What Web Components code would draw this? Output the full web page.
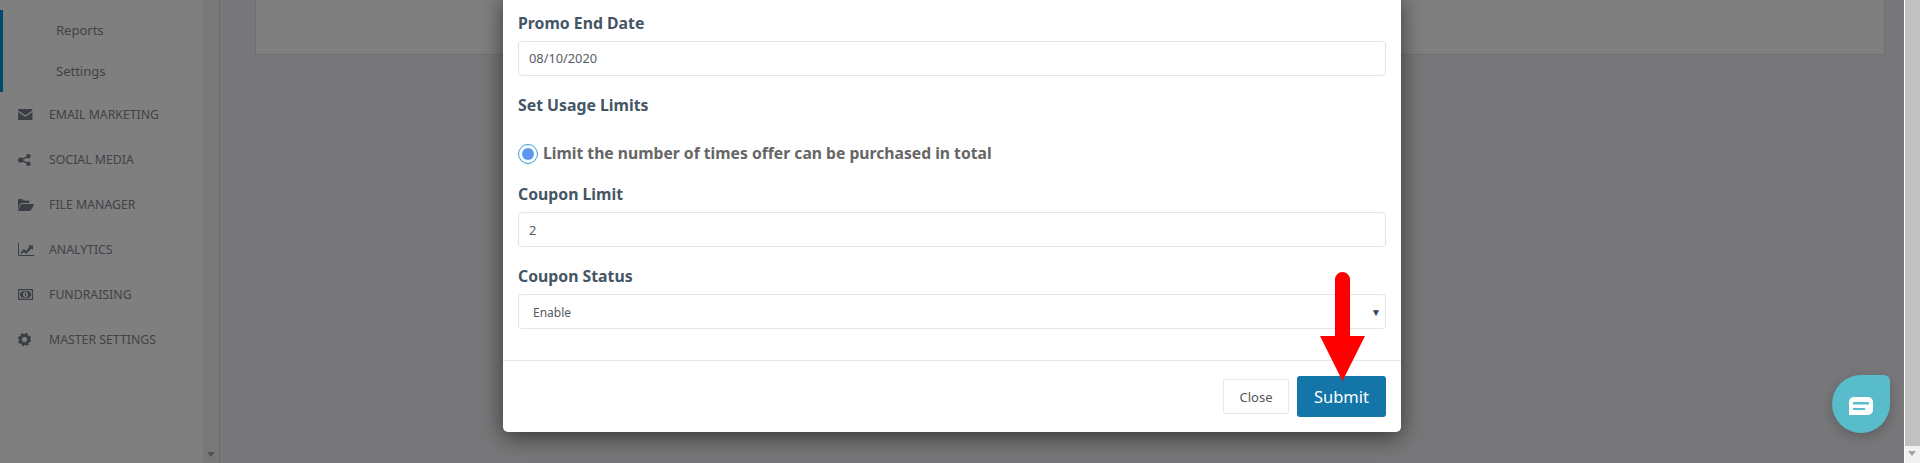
<!DOCTYPE html>
<html><head><meta charset="utf-8">
<style>
html,body{margin:0;padding:0;height:463px;overflow:hidden;background:#fff}
body{font-family:"Noto Sans","Open Sans",sans-serif}
</style></head><body>
<app-shell>
  <side-nav slot="nav">
    <sub-item>Reports</sub-item>
    <sub-item>Settings</sub-item>
    <nav-item><svg slot="icon" viewBox="0 0 15 12" width="14.500" height="11.500"><path fill="currentColor" d="M0 1.2C0 .5.5 0 1.2 0h12.6c.7 0 1.2.5 1.2 1.2v.4L7.5 6.600 0 1.600zM0 3.100l7.500 5 7.500-5v7.700c0 .7-.5 1.200-1.200 1.200H1.200C.5 12 0 11.500 0 10.800z"/></svg>EMAIL MARKETING</nav-item>
    <nav-item><svg slot="icon" viewBox="0 0 13 12" width="13" height="12"><g fill="currentColor"><circle cx="2.600" cy="6" r="2.600"/><circle cx="10.400" cy="2.300" r="2.300"/><circle cx="10.400" cy="9.700" r="2.300"/></g><path stroke="currentColor" stroke-width="1.400" d="M2.600 6l7.800-3.700M2.600 6l7.800 3.700"/></svg>SOCIAL MEDIA</nav-item>
    <nav-item><svg slot="icon" viewBox="0 0 16 12" width="16" height="12"><path fill="currentColor" d="M0 10V1.200C0 .5.500 0 1.200 0h3l1.300 1.500h4.800c.7 0 1.200.5 1.200 1.200V4H4C3.200 4 2.600 4.400 2.200 5z"/><path fill="currentColor" d="M4 5h11c.8 0 1.200.6.800 1.200L13 11c-.4.6-.9 1-1.600 1H1c-.8 0-1.200-.6-.8-1.200L2.800 5.800C3.100 5.300 3.500 5 4 5z"/></svg>FILE MANAGER</nav-item>
    <nav-item><svg slot="icon" viewBox="0 0 16 13" width="16" height="13"><path fill="none" stroke="currentColor" stroke-width="1" d="M.5 0v12.500H16"/><path fill="currentColor" d="M2.500 9.500 6 6l2 2 3.500-4L10 2.500h5V7l-1.500-1.500L8 11 6 9l-2.500 2z"/></svg>ANALYTICS</nav-item>
    <nav-item><svg slot="icon" viewBox="0 0 15 11" width="15" height="11"><path fill="currentColor" fill-rule="evenodd" d="M0 0h15v11H0zM1.200 1.200v8.600h12.600V1.200z"/><path fill="currentColor" fill-rule="evenodd" d="M3.500 2.300h8c.2 1 .7 1.500 1.500 1.700v3c-.8.200-1.300.7-1.500 1.700h-8C3.300 7.700 2.800 7.200 2 7V4c.8-.2 1.300-.7 1.500-1.700zM7.500 3a2.500 2.500 0 1 0 0 5 2.500 2.500 0 0 0 0-5z"/><rect x="7" y="4" width="1.200" height="3" fill="currentColor"/></svg>FUNDRAISING</nav-item>
    <nav-item><svg slot="icon" viewBox="0 0 24 24" width="13" height="13"><circle cx="12" cy="12" r="7.500" fill="none" stroke="currentColor" stroke-width="5.500"/><circle cx="12" cy="12" r="10" fill="none" stroke="currentColor" stroke-width="4.500" stroke-dasharray="4.300 3.550"/></svg>MASTER SETTINGS</nav-item>
  </side-nav>
  <promo-modal>
    <form-field label="Promo End Date" value="08/10/2020" style="--fs:12.800px;--off:-1px"></form-field>
    <limit-group></limit-group>
    <form-field label="Coupon Limit" value="2" style="--fs:12.800px"></form-field>
    <form-field label="Coupon Status" value="Enable" select style="--off:1px"></form-field>
  </promo-modal>
  <chat-bubble></chat-bubble>
</app-shell>
<script>
function def(name, html){
  customElements.define(name, class extends HTMLElement{
    constructor(){super();this.attachShadow({mode:'open'}).innerHTML=html(this);}
  });
}
const F='"Noto Sans","Open Sans",sans-serif';
def('app-shell',()=>`<style>
:host{display:flex;width:1920px;height:463px;overflow:hidden;position:relative;font-family:${F}}
.page{position:relative;flex:none;width:1904px;height:463px;display:flex;background:#eeeff2;overflow:hidden}
.side{flex:none;width:220px;display:flex;box-sizing:border-box;border-right:1px solid #d8d8d8;background:#fff}
.bar{flex:none;width:16px;background:#f1f1f1;position:relative;margin-left:auto}
.bar i{position:absolute;left:4px;bottom:6px;border:4px solid transparent;border-top:5px solid #a3a3a3;border-bottom:0}
.main{flex:1;padding:0 19px 0 35px;min-width:0}
.card{height:55px;box-sizing:border-box;background:#fff;border:1px solid #dfdfdf;border-top:0}
.dim{position:absolute;inset:0;background:rgba(0,0,0,.5)}
.sb{flex:none;width:16px;box-sizing:border-box;border-left:1px solid #fff;background:#f1f1f1;display:flex;flex-direction:column}
.sb b{flex:1;background:#c1c1c1}
.sb span{height:17px;position:relative}
.sb span i{position:absolute;left:3px;top:5px;border:4px solid transparent;border-top:5px solid #a3a3a3;border-bottom:0}
</style>
<div class="page">
  <div class="side"><slot name="nav"></slot><div class="bar"><i></i></div></div>
  <div class="main"><div class="card"></div></div>
  <div class="dim"></div>
  <slot></slot>
</div>
<div class="sb"><b></b><span><i></i></span></div>`);
def('side-nav',()=>`<style>
:host{display:block;width:203px;flex:none;padding-top:10px;box-sizing:border-box}
</style><slot></slot>`);
def('sub-item',()=>`<style>
:host{display:block;height:41px;line-height:41px;padding-left:56px;font-size:13px;color:#80868e;box-shadow:inset 3px 0 0 #0595d6}
</style><slot></slot>`);
def('nav-item',()=>`<style>
:host{display:flex;align-items:center;height:45px;font-size:12.300px;color:#80868e;padding-left:18px}
.i{width:31px;flex:none;display:flex;color:#747f8a}
</style><span class="i"><slot name="icon"></slot></span><slot></slot>`);
def('promo-modal',()=>`<style>
:host{position:absolute;left:503px;top:-6px;width:898px;height:438px;box-sizing:border-box;background:#fff;border-radius:0 0 5px 5px;box-shadow:0 5px 22px rgba(0,0,0,.55);display:flex;flex-direction:column}
.body{flex:1;padding:0 15px}
.foot{height:72px;box-sizing:border-box;border-top:1px solid #e1e8e8;display:flex;align-items:center;justify-content:flex-end;gap:8px;padding:0 15px 0 0}
.close{width:66px;height:35px;box-sizing:border-box;border:1px solid #e7e7e7;border-radius:2px;background:#fff;color:#555;font:13px ${F};display:flex;align-items:center;justify-content:center}
.submit{width:89px;height:41px;border-radius:3px;background:#1375a8;color:#fff;font:16.500px ${F};display:flex;align-items:center;justify-content:center}
.arrow{position:absolute;left:815px;top:275px}
</style>
<div class="body"><slot></slot></div>
<div class="foot"><span class="close">Close</span><span class="submit">Submit</span></div>
<svg class="arrow" width="48" height="114" viewBox="0 0 48 114"><path d="M24.500 3a7.500 7.500 0 0 0-7.500 7.500V67H2l22.500 45L47 67H32V10.500A7.500 7.500 0 0 0 24.500 3z" fill="#f00"/></svg>`);
def('form-field',(el)=>{
 const sel=el.hasAttribute('select');
 return `<style>
:host{display:block;padding-top:19px}
label{display:block;font-size:15.800px;font-weight:700;color:#445565;line-height:21px;height:21px;margin-bottom:7px}
.in{height:35px;box-sizing:border-box;border:1px solid #e1e8e8;border-radius:3px;display:flex;align-items:center;justify-content:space-between;padding:0 ${sel?'4px 0 14px':'10px'};font-size:var(--fs,12px);color:#555b66}
.v{margin-top:var(--off,0)}
.car{font-size:10px;color:#3b4250}
</style><label>${el.getAttribute('label')}</label><div class="in"><span class="v">${el.getAttribute('value')}</span>${sel?'<span class="car">▼</span>':''}</div>`});
def('limit-group',()=>`<style>
:host{display:block;padding:19px 0 1px}
h4{margin:0;font-size:15.800px;font-weight:700;color:#445565;line-height:21px;height:21px}
.r{display:flex;align-items:center;gap:5px;margin-top:28px;font-size:15.700px;font-weight:700;color:#666;height:20px}
.r .t{margin-top:-2px}
.o{width:20px;height:20px;box-sizing:border-box;border:1.500px solid #2f9fe0;border-radius:50%;display:flex;align-items:center;justify-content:center;flex:none}
.o i{width:12px;height:12px;border-radius:50%;background:#5b97ee}
</style><h4>Set Usage Limits</h4><div class="r"><span class="o"><i></i></span><span class="t">Limit the number of times offer can be purchased in total</span></div>`);
def('chat-bubble',()=>`<style>
:host{position:absolute;left:1832px;top:375px;width:58px;height:58px;background:#58bccb;border-radius:50% 6px 50% 50%;box-shadow:0 4px 12px rgba(0,0,0,.2);display:flex;align-items:center;justify-content:center}
</style><svg width="24" height="18" viewBox="0 0 24 18" style="margin-top:3px"><path fill="#fff" fill-rule="evenodd" d="M5 0h14a5 5 0 0 1 5 5v8a5 5 0 0 1-5 5H0V5a5 5 0 0 1 5-5zM4 5v2.500h16V5zM4 11v2h12v-2z"/></svg>`);
</script></body></html>
